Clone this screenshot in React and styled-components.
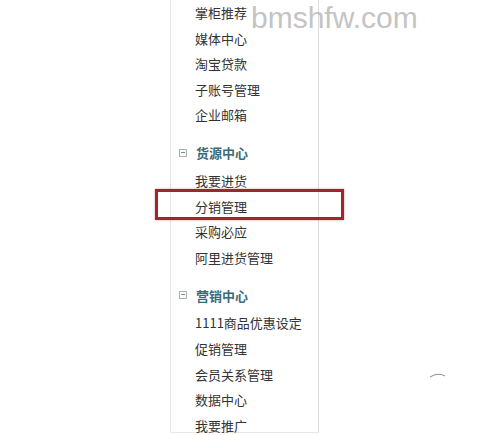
import React from 'react'
import styled, { createGlobalStyle } from 'styled-components'

const GlobalStyle = createGlobalStyle`
  html, body {
    margin: 0;
    padding: 0;
    background: #fff;
  }
`

const Page = styled.div`
  position: relative;
  display: flex;
  width: 500px;
  height: 435px;
  padding-left: 170px;
  box-sizing: border-box;
  overflow: hidden;
  background: #fff;
  font-family: "Noto Sans CJK SC", "Liberation Sans", sans-serif;
`

const Sidebar = styled.div`
  display: flex;
  flex-direction: column;
  gap: 10px;
  width: 147px;
  height: 432px;
  border-left: 1px solid #e4e4e4;
  border-right: 1px solid #dcdcdc;
  border-bottom: 1px solid #e8e8e8;
  background: #fff;
`

const Group = styled.div`
  display: flex;
  flex-direction: column;
`

const GroupTitle = styled.div`
  display: flex;
  align-items: center;
  gap: 9px;
  height: 30px;
  padding-left: 8px;
  font-size: 13px;
  font-weight: bold;
  color: #3b6b78;
`

const Toggle = styled.span`
  position: relative;
  box-sizing: border-box;
  width: 8px;
  height: 8px;
  border: 1px solid #a9b4b8;

  &::after {
    content: '';
    position: absolute;
    left: 1px;
    right: 1px;
    top: 2px;
    height: 1px;
    background: #7f8c90;
  }
`

const Item = styled.div`
  height: 25.6px;
  line-height: 25.6px;
  padding-left: 24px;
  font-size: 13px;
  color: #333;
  white-space: nowrap;
`

const Highlight = styled.div`
  position: absolute;
  left: 155px;
  top: 189px;
  width: 183px;
  height: 25px;
  border: 3px solid #a0262b;
  box-shadow: 0 0 2px rgba(160, 38, 43, 0.5);
`

const Watermark = styled.div`
  position: absolute;
  left: 251px;
  top: 0;
  font-family: "Liberation Sans", Arial, sans-serif;
  font-size: 30px;
  line-height: 36px;
  color: #c4c4c4;
`

const Cursor = styled.svg`
  position: absolute;
  left: 428px;
  top: 370px;
`

const groups = [
  {
    items: ['掌柜推荐', '媒体中心', '淘宝贷款', '子账号管理', '企业邮箱'],
  },
  {
    title: '货源中心',
    items: ['我要进货', '分销管理', '采购必应', '阿里进货管理'],
  },
  {
    title: '营销中心',
    items: ['1111商品优惠设定', '促销管理', '会员关系管理', '数据中心', '我要推广'],
  },
]

const App = () => (
  <Page>
    <GlobalStyle />
    <Sidebar>
      {groups.map((group, i) => (
        <Group key={i}>
          {group.title && (
            <GroupTitle>
              <Toggle />
              {group.title}
            </GroupTitle>
          )}
          {group.items.map(label => (
            <Item key={label}>{label}</Item>
          ))}
        </Group>
      ))}
    </Sidebar>
    <Highlight />
    <Watermark>bmshfw.com</Watermark>
    <Cursor width="24" height="14" viewBox="0 0 24 14">
      <path d="M2 7 Q10 2 17 6" stroke="#8a8a8a" strokeWidth="1" fill="none" />
    </Cursor>
  </Page>
)

export default App
